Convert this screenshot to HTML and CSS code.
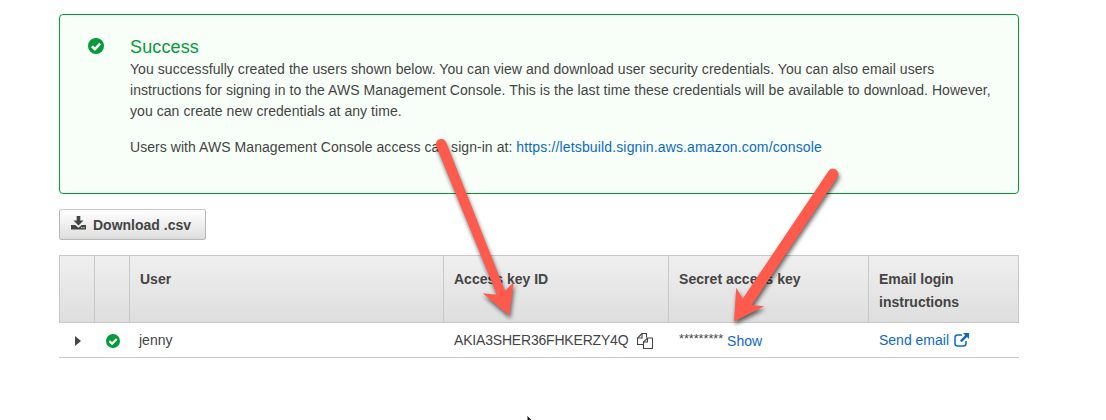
FILE: index.html
```html
<!DOCTYPE html>
<html lang="en">
<head>
<meta charset="utf-8">
<title>Add user</title>
<link rel="stylesheet" href="styles.css">
</head>
<body>
<svg class="defs" width="0" height="0" aria-hidden="true">
  <symbol id="check" viewBox="0 0 16 16">
    <circle cx="8" cy="8" r="8" fill="#069a38"/>
    <path d="M3.9 8.2 6.9 11.1 12.2 5.7" fill="none" stroke="#fff" stroke-width="2.6"/>
  </symbol>
</svg>
<main class="page">
  <section class="alert">
    <svg class="alert-icon"><use href="#check"/></svg>
    <div class="alert-body">
      <h1 class="alert-title">Success</h1>
      <p class="alert-text">You successfully created the users shown below. You can view and download user security credentials. You can also email users<br>instructions for signing in to the AWS Management Console. This is the last time these credentials will be available to download. However,<br>you can create new credentials at any time.</p>
      <p class="alert-text">Users with AWS Management Console access can sign-in at: <a class="link url">https://letsbuild.signin.aws.amazon.com/console</a></p>
    </div>
  </section>
  <button class="download">
    <svg class="download-icon" viewBox="0 0 15 14"><path d="M5.7 0h3.6v4.5h3.2L7.5 9.4 2.5 4.5h3.2z" fill="#444"/><path d="M0 9h4.2l3.3 2.7L10.800 9H15v4.500H0z" fill="#444"/><path d="M10.200 11.700h1.200m1 0h1.200" stroke="#eee"/></svg>
    <span class="download-label">Download .csv</span>
  </button>
  <div class="table">
    <div class="row head">
      <div class="cell"></div>
      <div class="cell"></div>
      <div class="cell">User</div>
      <div class="cell">Access key ID</div>
      <div class="cell wide">Secret access key</div>
      <div class="cell">Email login<br>instructions</div>
    </div>
    <div class="row data">
      <div class="cell center"><svg class="caret" viewBox="0 0 6 10"><path d="M0 0 6 5 0 10z" fill="#444"/></svg></div>
      <div class="cell center"><svg class="row-check"><use href="#check"/></svg></div>
      <div class="cell user">jenny</div>
      <div class="cell"><span class="key">AKIA3SHER36FHKERZY4Q</span><svg class="copy" viewBox="0 0 16 16" fill="none" stroke="#444" stroke-width="1.1"><path d="M6.500 11.500h-6V5L5 .5h4.500v4"/><path d="M5 .5V5H.5"/><path d="M6.500 15.500V9l4-4h5v10.500z"/><path d="M10.500 5v4h-4"/></svg></div>
      <div class="cell"><span class="stars">*********</span><a class="link show">Show</a></div>
      <div class="cell"><a class="link">Send email</a><svg class="external" viewBox="0 0 16 14"><path d="M8 2H3.500Q1 2 1 4.500v6Q1 13 3.500 13h6q2.500 0 2.500-2.500V8" fill="none" stroke="#0f69c4" stroke-width="1.500"/><path d="M9 0h6v6l-2-2-5.300 5.300-1.700-1.700L11.200 2.200z" fill="#0f69c4"/></svg></div>
    </div>
  </div>
</main>
<svg class="annotations" viewBox="0 0 1106 420">
  <g fill="#ff5a4c">
    <path d="M436.200 146A5.300 5.300 0 0 1 446 142L505 291 513.700 282 509.300 315.500 482.700 293.300 497 294.700Z"/>
    <path d="M828.400 171.200A5.300 5.300 0 0 1 837.500 177L751.700 305 764 306.300 734 321.500 736.300 287.700 742.700 298.700Z"/>
  </g>
</svg>
<svg class="pointer" viewBox="0 0 12 18"><path d="M1 1V15L4.500 11.500H11z" fill="#111" stroke="#fff"/></svg>
</body>
</html>
```
FILE: styles.css
```css
* { box-sizing: border-box; }
body {
  margin: 0;
  height: 420px;
  overflow: hidden;
  position: relative;
  background: #fff;
  color: #444;
  font: 14px/21px "Liberation Sans", Arial, sans-serif;
}
.defs { position: absolute; }
.page { padding: 14px 0 0 59px; width: 1019px; }
.alert {
  display: flex;
  height: 180px;
  padding: 21px 0 0 28px;
  border: 1px solid #069a38;
  border-radius: 4px;
  background: #f7fff8;
}
.alert-icon { width: 16px; height: 16px; margin: 2px 26px 0 0; flex: none; }
.alert-body { white-space: nowrap; }
.alert-title { margin: 0; font-size: 18px; line-height: 23px; font-weight: 400; letter-spacing: .12px; color: #069a38; }
.alert-text { margin: 0 0 15px; letter-spacing: .057px; }
.link { color: #0f69c4; }
.url { letter-spacing: .145px; }
.download {
  display: flex;
  align-items: center;
  gap: 7px;
  width: 147px;
  height: 31px;
  margin: 15px 0;
  padding: 0 0 0 11px;
  border: 1px solid #b7b7b7;
  border-top-color: #ccc;
  border-radius: 3px;
  background: linear-gradient(#fff, #dedede);
  color: #444;
  font: bold 14px/21px "Liberation Sans", Arial, sans-serif;
}
.download-icon { width: 15px; height: 14px; margin-top: -3px; }
.download-label { padding-top: 2px; }
.row { display: grid; grid-template-columns: 35px 35px 314px 225px 200px 151px; }
.cell { padding-left: 10px; }
.head {
  height: 68px;
  border: 1px solid #c8c8c8;
  background: linear-gradient(#efefef, #dedede);
  font-weight: 700;
  line-height: 23px;
  grid-template-columns: 34px 35px 314px 225px 200px 150px;
}
.head .cell { padding-top: 12px; }
.head .cell + .cell { border-left: 1px solid #c8c8c8; }
.head .wide { letter-spacing: .06px; }
.data { height: 35px; border-bottom: 1px solid #c8c8c8; }
.data .cell { display: flex; align-items: center; padding-left: 11px; }
.data .center { justify-content: center; padding: 2px 0 0 3px; }
.data .user { padding-left: 10px; }
.caret { width: 6px; height: 10px; }
.row-check { width: 14px; height: 14px; }
.key { letter-spacing: -.19px; }
.copy { width: 16px; height: 16px; margin: 1px 0 0 9px; flex: none; }
.stars { margin: -1px 4px 0 0; font-size: 12.6px; }
.show { padding-top: 2px; }
.external { width: 16px; height: 14px; margin-left: 5px; }
.annotations {
  position: absolute;
  inset: 0;
  width: 1106px;
  height: 420px;
  filter: drop-shadow(1px 3px 2px rgba(0, 0, 0, .6));
}
.pointer { position: absolute; left: 526px; top: 414px; width: 12px; height: 18px; }
```
